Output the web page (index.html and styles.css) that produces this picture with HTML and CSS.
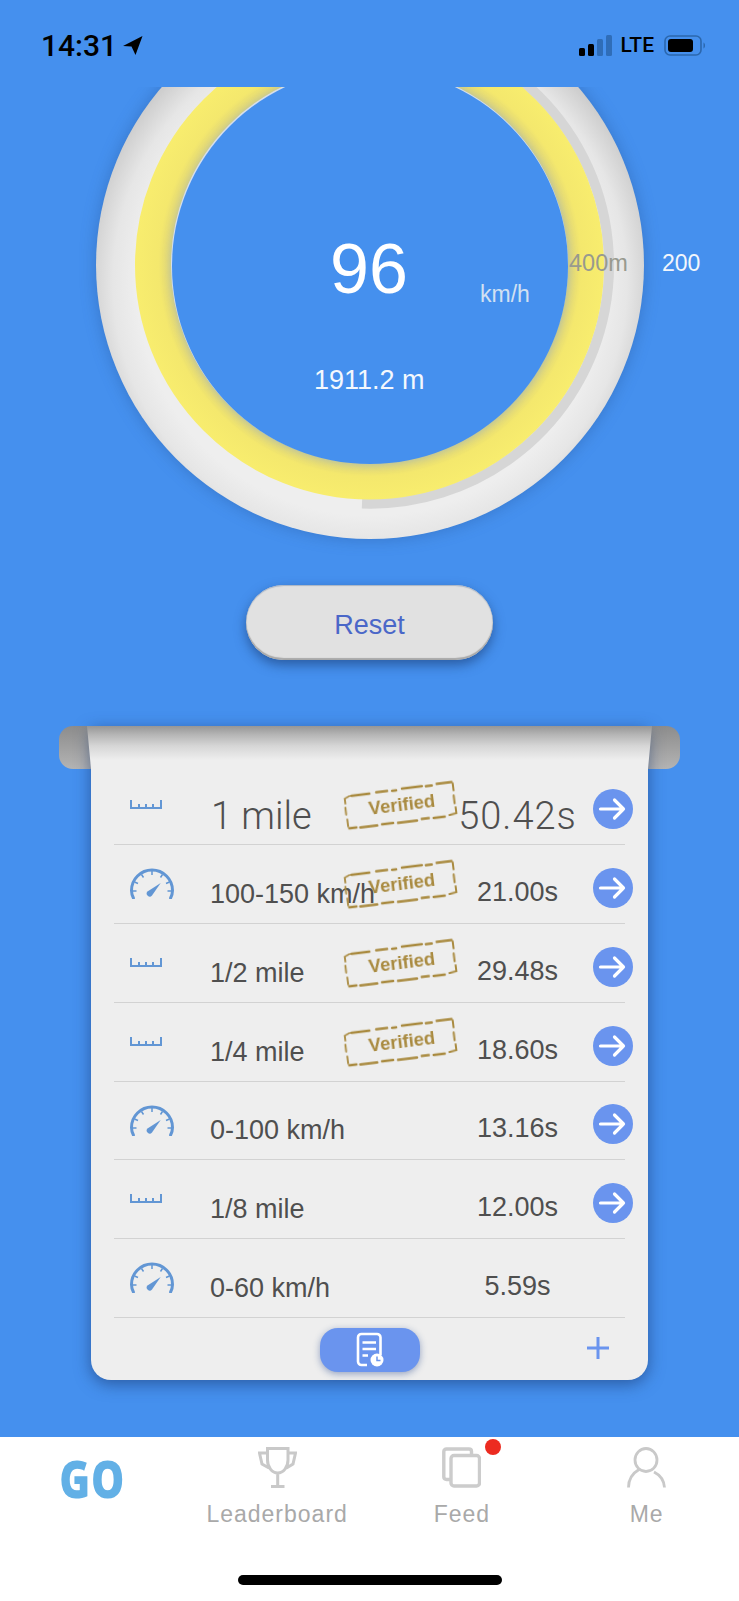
FILE: index.html
```html
<!DOCTYPE html>
<html lang="en">
<head>
<meta charset="utf-8">
<title>Speed run</title>
<link rel="stylesheet" href="styles.css">
</head>
<body>
<svg class="defs" width="0" height="0" aria-hidden="true">
  <defs>
    <symbol id="ruler" viewBox="0 0 32 9">
      <path d="M1 0V8H31V0M9 4V8M16 4V8M23 4V8" fill="none" stroke="#6296d4" stroke-width="2"/>
    </symbol>
    <symbol id="dial" viewBox="0 0 44 31">
      <path d="M3.400 30C1.800 27 1.500 24.500 1.500 22.500A20.500 20.500 0 0 1 42.500 22.500C42.500 24.500 42.200 27 40.600 30" fill="none" stroke="#6296d4" stroke-width="3" stroke-linecap="round"/>
      <path d="M22 3V7M11.500 6.500L13.500 9.500M32.500 6.500L30.500 9.500M4.500 14L8 15.500M39.500 14L36 15.500M3 23H6.500M41 23H37.500" fill="none" stroke="#6296d4" stroke-width="1.500"/>
      <path d="M30.700 15L22 27.500A3 3 0 1 1 17.500 23.500Z" fill="#6296d4"/>
    </symbol>
    <symbol id="go" viewBox="0 0 40 40">
      <circle cx="20" cy="20" r="20" fill="#6a94ee"/>
      <path d="M7.500 20H30.500M21.500 11L30.500 20L21.500 29" fill="none" stroke="#fff" stroke-width="3.200" stroke-linecap="round" stroke-linejoin="round"/>
    </symbol>
    <symbol id="stamp-edge" viewBox="0 0 112 37">
      <g fill="none" stroke="#a98a3f" stroke-linecap="round">
        <path d="M9 3H27M34 2.500H45M50 3H54M60 2H80M84 2.500H90M95 1.500H110" stroke-width="2.400"/>
        <path d="M111 3V10M110.500 15V23M111 27V33L104 34" stroke-width="2"/>
        <path d="M99 35H88M83 34.500H76M71 35.500H52M47 35H36M31 35.500H14M10 35H3" stroke-width="2.600"/>
        <path d="M2 33V26M1.500 21V14M2 10V5L7 3" stroke-width="1.800"/>
      </g>
    </symbol>
  </defs>
</svg>

<div class="screen">
  <header class="status">
    <div class="status-time">
      <span>14:31</span>
      <svg class="status-nav" viewBox="0 0 20 19"><path d="M19.500 0L0 10L8.500 10.500L12.500 19Z"/></svg>
    </div>
    <div class="status-right">
      <svg class="status-signal" viewBox="0 0 33 21">
        <rect class="sig-on" x="0" y="13" width="6" height="8" rx="1.500"/>
        <rect class="sig-on" x="9" y="9" width="6" height="12" rx="1.500"/>
        <rect class="sig-off" x="18" y="4" width="6" height="17" rx="1.500"/>
        <rect class="sig-off" x="27" y="0" width="6" height="21" rx="1.500"/>
      </svg>
      <span class="status-lte">LTE</span>
      <svg class="status-battery" viewBox="0 0 42 21">
        <rect x="1" y="1" width="36" height="19" rx="5" fill="none" stroke="#2b67ad" stroke-width="1.600"/>
        <rect x="4" y="4" width="25" height="13" rx="3" fill="#000"/>
        <path d="M39.500 7.500C41.500 8.500 41.500 12.500 39.500 13.500Z" fill="#2b67ad"/>
      </svg>
    </div>
  </header>

  <main class="main">
    <section class="gauge">
      <svg class="gauge-dial" viewBox="0 87 739 453">
        <defs>
          <radialGradient id="rim" gradientUnits="userSpaceOnUse" cx="370" cy="282" r="292">
            <stop offset="0.8" stop-color="#eeeeee"/>
            <stop offset="0.88" stop-color="#e6e6e6"/>
            <stop offset="1" stop-color="#c6c6c6"/>
          </radialGradient>
          <radialGradient id="lane" gradientUnits="userSpaceOnUse" cx="370" cy="265" r="235">
            <stop offset="0.84" stop-color="#dcd27a"/>
            <stop offset="0.9" stop-color="#f4e86d"/>
            <stop offset="1" stop-color="#f8ed6e"/>
          </radialGradient>
        </defs>
        <circle class="rim" cx="370" cy="265" r="274" fill="url(#rim)"/>
        <path d="M362 503.500A238.500 238.500 0 0 0 452 41" fill="none" stroke="#d6d6d6" stroke-width="10"/>
        <circle cx="369.500" cy="265" r="216.500" fill="none" stroke="url(#lane)" stroke-width="36"/>
        <circle class="well" cx="370" cy="266" r="198"/>
      </svg>
      <span class="g-label g-speed">96</span>
      <span class="g-label g-unit">km/h</span>
      <span class="g-label g-mark g-mark-400">400m</span>
      <span class="g-label g-mark g-mark-200">200</span>
      <span class="g-label g-distance">1911.2 m</span>
    </section>

    <button class="reset">Reset</button>

    <section class="scroll">
      <div class="roller roller-left"></div>
      <div class="roller roller-right"></div>
      <div class="sheet">
        <div class="sheet-top"></div>
        <ul class="rows">
          <li class="row row-lead">
            <svg class="ico-ruler"><use href="#ruler"/></svg>
            <span class="r-name">1 mile</span>
            <span class="r-time">50.42s</span>
            <svg class="r-go"><use href="#go"/></svg>
            <div class="stamp"><svg class="stamp-edge"><use href="#stamp-edge"/></svg><span>Verified</span></div>
          </li>
          <li class="row">
            <svg class="ico-dial"><use href="#dial"/></svg>
            <span class="r-name">100-150 km/h</span>
            <span class="r-time">21.00s</span>
            <svg class="r-go"><use href="#go"/></svg>
            <div class="stamp"><svg class="stamp-edge"><use href="#stamp-edge"/></svg><span>Verified</span></div>
          </li>
          <li class="row">
            <svg class="ico-ruler"><use href="#ruler"/></svg>
            <span class="r-name">1/2 mile</span>
            <span class="r-time">29.48s</span>
            <svg class="r-go"><use href="#go"/></svg>
            <div class="stamp"><svg class="stamp-edge"><use href="#stamp-edge"/></svg><span>Verified</span></div>
          </li>
          <li class="row">
            <svg class="ico-ruler"><use href="#ruler"/></svg>
            <span class="r-name">1/4 mile</span>
            <span class="r-time">18.60s</span>
            <svg class="r-go"><use href="#go"/></svg>
            <div class="stamp"><svg class="stamp-edge"><use href="#stamp-edge"/></svg><span>Verified</span></div>
          </li>
          <li class="row">
            <svg class="ico-dial"><use href="#dial"/></svg>
            <span class="r-name">0-100 km/h</span>
            <span class="r-time">13.16s</span>
            <svg class="r-go"><use href="#go"/></svg>
          </li>
          <li class="row">
            <svg class="ico-ruler"><use href="#ruler"/></svg>
            <span class="r-name">1/8 mile</span>
            <span class="r-time">12.00s</span>
            <svg class="r-go"><use href="#go"/></svg>
          </li>
          <li class="row">
            <svg class="ico-dial"><use href="#dial"/></svg>
            <span class="r-name">0-60 km/h</span>
            <span class="r-time">5.59s</span>
          </li>
        </ul>
        <div class="sheet-foot">
          <button class="log-btn">
            <svg viewBox="0 0 30 36" width="30" height="36">
              <path d="M12 33H6.500A3.500 3.500 0 0 1 3 29.500V5.500A3.500 3.500 0 0 1 6.500 2H22A3.500 3.500 0 0 1 25.500 5.500V23" fill="none" stroke="#fff" stroke-width="2.600"/>
              <path d="M7.500 10.500H21M7.500 17H21M7.500 23.500H13" fill="none" stroke="#fff" stroke-width="2.600"/>
              <circle cx="22" cy="28" r="6.500" fill="#fff"/>
              <path d="M22 24.500V28.500H25.500" fill="none" stroke="#6a94ee" stroke-width="1.500"/>
            </svg>
          </button>
          <svg class="plus" viewBox="0 0 22 22"><path d="M11 0V22M0 11H22" stroke="#6a94ee" stroke-width="3"/></svg>
        </div>
      </div>
    </section>
  </main>

  <nav class="tabs">
    <div class="tab-row">
      <div class="tab tab-go"><span class="go-mark">GO</span></div>
      <div class="tab">
        <svg class="tab-ico" viewBox="0 0 39 41" width="39" height="41">
          <path d="M9.500 1.500H30V13C30 20 25.500 26 19.700 26S9.500 20 9.500 13ZM9.500 6H1.500L4 17L11 21M30 6H37.500L35 17L28.500 21M19.700 26V39M13 39.500H26.500" fill="none" stroke="#c9c9c9" stroke-width="3"/>
        </svg>
        <span class="tab-label">Leaderboard</span>
      </div>
      <div class="tab tab-feed">
        <svg class="tab-ico" viewBox="0 0 39 41" width="39" height="41">
          <path d="M9 32.500H4.500C2.800 32.500 1.800 31.500 1.800 30V4.500C1.800 3 2.800 2 4.500 2H27C28.500 2 29.500 3 29.500 4.500V8" fill="none" stroke="#cccccc" stroke-width="3.400"/>
          <rect x="9" y="8.500" width="28.500" height="30.500" rx="3" fill="#fff" stroke="#cccccc" stroke-width="3.400"/>
        </svg>
        <span class="tab-dot"></span>
        <span class="tab-label">Feed</span>
      </div>
      <div class="tab">
        <svg class="tab-ico" viewBox="0 0 39 41" width="39" height="41">
          <ellipse cx="19" cy="13" rx="11" ry="11.500" fill="none" stroke="#c9c9c9" stroke-width="2.800"/>
          <path d="M12 22.500C6 26 1.500 32 1.500 40.500M27 25C33 28 37 33 37.500 40.500" fill="none" stroke="#c9c9c9" stroke-width="2.800"/>
        </svg>
        <span class="tab-label">Me</span>
      </div>
    </div>
    <div class="home-bar"></div>
  </nav>
</div>
</body>
</html>
```
FILE: styles.css
```css
* { box-sizing: border-box; }
html, body { margin: 0; padding: 0; }
body {
  width: 739px;
  height: 1601px;
  overflow: hidden;
  font-family: "Liberation Sans", Arial, sans-serif;
  background: #4590ee;
}
.defs { position: absolute; }
.screen {
  width: 739px;
  height: 1601px;
  display: flex;
  flex-direction: column;
}

/* status bar */
.status {
  position: relative;
  z-index: 2;
  flex: 0 0 87px;
  background: #4590ee;
  display: flex;
  justify-content: space-between;
  align-items: flex-start;
  padding: 31px 33px 0 41px;
  color: #000;
}
.status-time {
  display: flex;
  align-items: center;
  gap: 6px;
  font-family: Roboto, sans-serif;
  font-weight: 500;
  font-size: 30px;
  line-height: 30px;
}
.status-nav { width: 20px; height: 19px; fill: #000; margin-top: -2px; }
.status-right { display: flex; align-items: center; height: 30px; margin-top: -1px; }
.status-signal { width: 33px; height: 21px; margin-right: 9px; }
.sig-on { fill: #000; }
.sig-off { fill: #2f6db8; }
.status-lte {
  font-family: Roboto, sans-serif;
  font-weight: 500;
  font-size: 21px;
  line-height: 30px;
  margin-right: 10px;
}
.status-battery { width: 42px; height: 21px; }

/* gauge */
.main { flex: 1; display: flex; flex-direction: column; align-items: flex-start; }
.gauge { position: relative; width: 739px; height: 453px; flex: none; }
.gauge-dial { display: block; width: 739px; height: 453px; overflow: visible; }
.rim { filter: drop-shadow(0 0 8px rgba(30, 70, 130, .35)); }
.well { fill: #4590ee; filter: drop-shadow(0 0 4px rgba(120, 165, 235, .5)); }
.g-label { position: absolute; white-space: nowrap; line-height: 30px; }
.g-speed { left: 330px; top: 142px; font-size: 70px; line-height: 80px; color: #fff; }
.g-unit { left: 480px; top: 192px; font-size: 23px; color: #d2e0f2; }
.g-mark { font-size: 23.500px; top: 161px; }
.g-mark-400 { left: 569px; color: #989a8f; }
.g-mark-200 { left: 662px; font-size: 23px; color: #f2f6fc; }
.g-distance { left: 314px; top: 278px; font-size: 27px; color: #f4f8fd; }

/* reset */
.reset {
  flex: none;
  width: 247px;
  height: 75px;
  margin: 45px 0 0 246px;
  padding: 5px 0 0;
  border: 0;
  border-radius: 38px;
  background: #e1e1e1;
  color: #4a67c8;
  font: 27px "Liberation Sans", Arial, sans-serif;
  box-shadow: inset 0 -2px 1px #a8a8a8, inset 0 1px 1px #a9b4c4, 0 5px 12px rgba(20, 50, 100, .55);
}

/* record sheet */
.scroll {
  position: relative;
  flex: none;
  width: 621px;
  margin: 66px 0 0 59px;
  padding: 0 32px;
}
.roller {
  position: absolute;
  top: 0;
  width: 40px;
  height: 43px;
  background: linear-gradient(180deg, #8c8c8c, #b4b4b4);
}
.roller-left { left: 0; border-radius: 14px 0 0 14px; }
.roller-right { right: 0; border-radius: 0 14px 14px 0; }
.sheet {
  position: relative;
  height: 654px;
  padding-top: 40px;
  background: #eeeeee;
  border-radius: 0 0 20px 20px;
  box-shadow: 0 4px 16px rgba(25, 55, 110, .6);
}
.sheet-top {
  position: absolute;
  top: 0;
  left: -4px;
  right: -4px;
  height: 43px;
  clip-path: polygon(0 0, 100% 0, calc(100% - 4px) 100%, 4px 100%);
  background: linear-gradient(180deg, #969696 0, #b6b6b6 9px, #d6d6d6 20px, #eeeeee 34px);
}
.rows { list-style: none; margin: 0 23px; padding: 0; position: relative; }
.row {
  position: relative;
  height: 78.900px;
  display: flex;
  align-items: flex-end;
  border-bottom: 1px solid #d2d2d2;
  color: #4f4f4f;
}
.ico-ruler { position: absolute; left: 16px; top: 34px; width: 32px; height: 9px; }
.ico-dial { position: absolute; left: 16px; top: 23px; width: 44px; height: 31px; }
.r-name {
  margin: 0 0 13px 96px;
  width: 230px;
  flex: none;
  font-size: 27px;
  line-height: 32px;
  white-space: nowrap;
}
.r-time {
  margin-bottom: 15px;
  padding-left: 2px;
  width: 153px;
  flex: none;
  text-align: center;
  font-size: 27px;
  line-height: 32px;
}
.r-go { flex: none; width: 40px; height: 40px; margin: 0 -10px 15px 0; }
.row-lead .r-name,
.row-lead .r-time {
  font-family: Roboto, sans-serif;
  font-weight: 300;
  font-size: 38px;
  line-height: 44px;
  margin-bottom: 6px;
}
.row-lead .r-name { margin-left: 97px; width: 229px; }
.row-lead .r-time { letter-spacing: 1px; }
.stamp {
  position: absolute;
  left: 230px;
  top: 21px;
  width: 112px;
  height: 37px;
  padding: 0 0 2px 4px;
  transform: rotate(-7deg);
  display: flex;
  align-items: center;
  justify-content: center;
  color: #a98a3f;
  font-weight: 700;
  font-size: 18.500px;
  filter: blur(.3px);
}
.stamp-edge { position: absolute; inset: 0; width: 112px; height: 37px; }
.sheet-foot {
  display: grid;
  grid-template-columns: 1fr auto 1fr;
  padding-top: 8.500px;
  margin-top: 1px;
}
.log-btn {
  grid-column: 2;
  width: 100px;
  height: 44px;
  padding: 0;
  border: 0;
  border-radius: 18px;
  background: #6a94ee;
  box-shadow: 0 2px 7px rgba(40, 70, 140, .45);
  display: flex;
  align-items: center;
  justify-content: center;
}
.plus { grid-column: 3; justify-self: end; width: 22px; height: 22px; margin: 9px 39px 0 0; }

/* tab bar */
.tabs {
  flex: 0 0 164px;
  background: #fff;
  display: flex;
  flex-direction: column;
  align-items: center;
}
.tab-row { width: 739px; display: grid; grid-template-columns: repeat(4, 1fr); padding-top: 10px; }
.tab { position: relative; display: flex; flex-direction: column; align-items: center; }
.tab-ico { display: block; }
.tab-label {
  margin-top: 13px;
  font-size: 23px;
  line-height: 26px;
  letter-spacing: 1px;
  color: #a9a9a9;
}
.go-mark {
  margin-top: 3px;
  font-family: "Open Sans", sans-serif;
  font-weight: 800;
  font-size: 51px;
  line-height: 56px;
  letter-spacing: 1px;
  color: #62b0e6;
  transform: scaleX(.82);
}
.tab-dot {
  position: absolute;
  left: 115px;
  top: -8px;
  width: 16px;
  height: 16px;
  border-radius: 50%;
  background: #ec2b20;
}
.home-bar {
  margin-top: auto;
  margin-bottom: 16px;
  width: 264px;
  height: 10px;
  border-radius: 5px;
  background: #000;
}
```
